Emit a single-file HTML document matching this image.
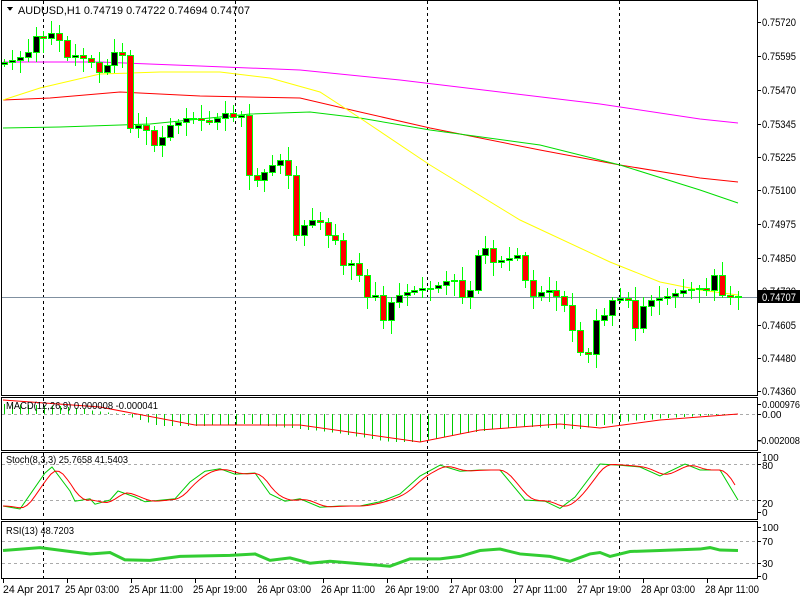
<!DOCTYPE html>
<html><head><meta charset="utf-8"><style>
html,body{margin:0;padding:0;background:#fff;}
body{width:800px;height:600px;overflow:hidden;position:relative;font-family:"Liberation Sans",sans-serif;}
svg{position:absolute;left:0;top:0;}
text{font-family:"Liberation Sans",sans-serif;font-size:11px;fill:#000;}
</style></head><body>
<svg id="s" width="800" height="600" viewBox="0 0 800 600" shape-rendering="crispEdges">
<rect x="0" y="0" width="800" height="600" fill="#fff"/>
<g id="grid"></g>
<g id="ma" shape-rendering="auto"></g>
<g id="c"></g>
<g id="ind"></g>
<g fill="none" stroke="#000" stroke-width="1">
<rect x="1.5" y="0.5" width="756" height="395"/>
<rect x="1.5" y="397.5" width="756" height="53"/>
<rect x="1.5" y="452.5" width="756" height="67"/>
<rect x="1.5" y="521.5" width="756" height="57"/>
</g>
<g id="ticks" stroke="#000"></g>
<g>
<text x="762" y="26" textLength="34" lengthAdjust="spacingAndGlyphs">0.75720</text>
<text x="762" y="60" textLength="34" lengthAdjust="spacingAndGlyphs">0.75595</text>
<text x="762" y="94" textLength="34" lengthAdjust="spacingAndGlyphs">0.75470</text>
<text x="762" y="128" textLength="34" lengthAdjust="spacingAndGlyphs">0.75345</text>
<text x="762" y="161" textLength="34" lengthAdjust="spacingAndGlyphs">0.75225</text>
<text x="762" y="194" textLength="34" lengthAdjust="spacingAndGlyphs">0.75100</text>
<text x="762" y="228" textLength="34" lengthAdjust="spacingAndGlyphs">0.74975</text>
<text x="762" y="262" textLength="34" lengthAdjust="spacingAndGlyphs">0.74850</text>
<text x="762" y="295" textLength="34" lengthAdjust="spacingAndGlyphs">0.74730</text>
<rect x="758" y="290" width="42" height="13" fill="#000"/>
<text x="762" y="301" style="fill:#fff" textLength="34" lengthAdjust="spacingAndGlyphs">0.74707</text>
<text x="762" y="329" textLength="34" lengthAdjust="spacingAndGlyphs">0.74605</text>
<text x="762" y="362" textLength="34" lengthAdjust="spacingAndGlyphs">0.74480</text>
<text x="762" y="395" textLength="34" lengthAdjust="spacingAndGlyphs">0.74360</text>
<text x="762" y="408" style="font-size:10px" textLength="38" lengthAdjust="spacingAndGlyphs">0.000976</text>
<text x="762" y="418" style="font-size:10px">0.00</text>
<text x="758" y="444" style="font-size:10px" textLength="42" lengthAdjust="spacingAndGlyphs">-0.002008</text>
<text x="762" y="461" style="font-size:10px">100</text>
<text x="762" y="469" style="font-size:10px">80</text>
<text x="762" y="507" style="font-size:10px">20</text>
<text x="762" y="516" style="font-size:10px">0</text>
<text x="762" y="531" style="font-size:10px">100</text>
<text x="762" y="545" style="font-size:10px">70</text>
<text x="762" y="567" style="font-size:10px">30</text>
<text x="762" y="580" style="font-size:10px">0</text>
</g>
<path d="M7 7 L13 7 L10 11 Z" fill="#000"/>
<text x="18" y="14" textLength="232" lengthAdjust="spacingAndGlyphs">AUDUSD,H1  0.74719 0.74722 0.74694 0.74707</text>
<text x="6" y="409" style="font-size:10.5px" textLength="152" lengthAdjust="spacingAndGlyphs">MACD(12,26,9) 0.000008 -0.000041</text>
<text x="6" y="463" style="font-size:10.5px" textLength="122" lengthAdjust="spacingAndGlyphs">Stoch(8,3,3) 25.7658 41.5403</text>
<text x="6" y="534" style="font-size:10.5px" textLength="68" lengthAdjust="spacingAndGlyphs">RSI(13) 48.7203</text>
<g style="font-size:10.5px">
<text x="3" y="593" textLength="57" lengthAdjust="spacingAndGlyphs">24 Apr 2017</text>
<text x="65" y="593" textLength="54" lengthAdjust="spacingAndGlyphs">25 Apr 03:00</text>
<text x="129" y="593" textLength="54" lengthAdjust="spacingAndGlyphs">25 Apr 11:00</text>
<text x="193" y="593" textLength="54" lengthAdjust="spacingAndGlyphs">25 Apr 19:00</text>
<text x="257" y="593" textLength="54" lengthAdjust="spacingAndGlyphs">26 Apr 03:00</text>
<text x="321" y="593" textLength="54" lengthAdjust="spacingAndGlyphs">26 Apr 11:00</text>
<text x="385" y="593" textLength="54" lengthAdjust="spacingAndGlyphs">26 Apr 19:00</text>
<text x="449" y="593" textLength="54" lengthAdjust="spacingAndGlyphs">27 Apr 03:00</text>
<text x="513" y="593" textLength="54" lengthAdjust="spacingAndGlyphs">27 Apr 11:00</text>
<text x="577" y="593" textLength="54" lengthAdjust="spacingAndGlyphs">27 Apr 19:00</text>
<text x="641" y="593" textLength="54" lengthAdjust="spacingAndGlyphs">28 Apr 03:00</text>
<text x="705" y="593" textLength="54" lengthAdjust="spacingAndGlyphs">28 Apr 11:00</text>
</g>
</svg>
<script>
(function(){
var NS="http://www.w3.org/2000/svg";
function el(p,t,a){var e=document.createElementNS(NS,t);for(var k in a)e.setAttribute(k,a[k]);p.appendChild(e);return e;}
var g=document.getElementById('grid'),ma=document.getElementById('ma'),c=document.getElementById('c'),ind=document.getElementById('ind'),tk=document.getElementById('ticks');
[43,235,427,619].forEach(function(x){
 [[1,395],[398,450],[453,519],[522,578]].forEach(function(r){
  el(g,'line',{x1:x+.5,y1:r[0],x2:x+.5,y2:r[1],stroke:'#000','stroke-dasharray':'3,3'});});});
[464.5,500.5,541.5,563.5,414.5].forEach(function(v){
 el(g,'line',{x1:2,y1:v,x2:757,y2:v,stroke:'#aaa','stroke-dasharray':'3,3'});});
el(g,'line',{x1:2,y1:297.5,x2:757,y2:297.5,stroke:'#8090a0'});
[22,56,90,124,157,190,224,258,291,325,358,391,404,414,440,452,464,500,512,527,541,563,576].forEach(function(y){el(tk,'line',{x1:758,y1:y+.5,x2:761,y2:y+.5});});
[3,67,131,195,259,323,387,451,515,579,643,707].forEach(function(x){el(tk,'line',{x1:x+.5,y1:579,x2:x+.5,y2:583});});
function pl(pts,col,w){var d=pts.map(function(p,i){return (i?'L':'M')+p[0]+' '+p[1];}).join(' ');el(ma,'path',{d:d,stroke:col,fill:'none','stroke-width':w||1});}
pl([[3,62],[100,62],[200,66],[300,70],[400,80],[500,92],[600,104],[700,119],[738,123]],'#ff00ff');
pl([[3,100],[50,98],[120,92],[200,96],[300,98],[360,112],[430,128],[540,150],[620,165],[700,178],[738,182]],'#ff0000');
pl([[3,128],[60,127],[150,124],[250,114],[310,112],[360,118],[430,130],[540,145],[620,165],[700,190],[738,203]],'#00dd00');
pl([[3,100],[40,88],[100,74],[160,72],[220,72],[270,78],[320,92],[360,118],[430,165],[520,220],[610,262],[660,282],[700,290],[738,295]],'#ffff00');
var cl=[62,60,57,52,36,38,33,40,57,55,58,62,72,65,52,55,128,125,130,145,137,125,122,118,118,120,122,118,113,117,115,175,180,172,165,160,175,235,225,220,222,235,240,265,263,275,297,295,320,302,295,292,290,288,288,285,281,280,297,290,255,248,262,260,258,255,280,296,292,290,296,305,330,352,354,320,315,300,298,300,328,306,300,298,296,293,290,289,288,290,275,295,297,296];
var n=cl.length,prev=64;
for(var i=0;i<n;i++){
 var cx=Math.round(4+i*734/(n-1)),o=prev,cc=cl[i];
 var tp=Math.min(o,cc),bt=Math.max(o,cc);
 var hi=tp-3-(i*7%11),lo=bt+3+(i*5%13);
 el(c,'line',{x1:cx+.5,y1:hi,x2:cx+.5,y2:lo,stroke:'#00ff00'});
 var h=Math.max(bt-tp,1);
 el(c,'rect',{x:cx-2.5,y:tp+.5,width:6,height:h,fill:cc>o?'#ff0000':'#000',stroke:'#00ff00'});
 prev=cc;
}
function interp(k,x){for(var j=1;j<k.length;j++){if(x<=k[j][0]){var a=k[j-1],b=k[j];return a[1]+(b[1]-a[1])*(x-a[0])/(b[0]-a[0]);}}return k[k.length-1][1];}
var hk=[[0,10],[60,8],[120,0],[160,-12],[200,-12],[250,-10],[330,-18],[390,-28],[420,-28],[460,-20],[520,-12],[560,-15],[580,-15],[620,-8],[680,-3],[740,0]];
for(var x=4;x<=740;x+=8){var v=interp(hk,x);el(ind,'line',{x1:x+.5,y1:414,x2:x+.5,y2:414-v,stroke:'#00cc00'});}
function ipl(k,col,w){var d=k.map(function(p,i){return (i?'L':'M')+p[0]+' '+p[1];}).join(' ');el(ind,'path',{d:d,stroke:col,fill:'none','stroke-width':w||1,'shape-rendering':'auto'});}
ipl([[3,400],[100,407],[195,425],[300,425],[420,442],[480,430],[560,424],[600,428],[660,420],[738,414]],'#ff0000');
function sy(v){return 512-0.6*v;}
var gs=[[3,10],[20,5],[45,65],[52,75],[70,35],[75,18],[90,22],[95,13],[110,20],[118,35],[135,25],[145,17],[175,22],[190,50],[205,68],[220,72],[235,63],[255,65],[270,30],[285,18],[300,22],[320,8],[340,10],[360,10],[380,17],[400,30],[420,60],[440,78],[460,68],[480,70],[500,70],[525,20],[545,18],[560,6],[575,25],[600,80],[620,78],[640,75],[660,60],[685,80],[700,70],[720,70],[738,20]];
ipl(gs.map(function(p){return [p[0],sy(p[1])];}),'#00cc00');
var rs=[];for(var xx=3;xx<=738;xx+=4){var s=0,m=0;for(var d=0;d<=12;d+=3){s+=interp(gs,Math.max(3,xx-d));m++;}rs.push([xx,sy(s/m)]);}
ipl(rs,'#ff0000');
function ry(v){return 576-0.49*v;}
var rk=[[3,52],[40,58],[70,50],[90,45],[110,48],[125,33],[150,32],[180,40],[230,42],[255,45],[270,32],[290,37],[310,26],[330,30],[360,25],[390,20],[410,35],[440,35],[460,40],[480,52],[500,55],[520,45],[550,40],[570,30],[590,45],[600,48],[610,40],[630,50],[660,52],[700,55],[710,58],[720,53],[738,52]];
ipl(rk.map(function(p){return [p[0],ry(p[1])];}),'#32cd32',3);
})();
</script>
</body></html>
